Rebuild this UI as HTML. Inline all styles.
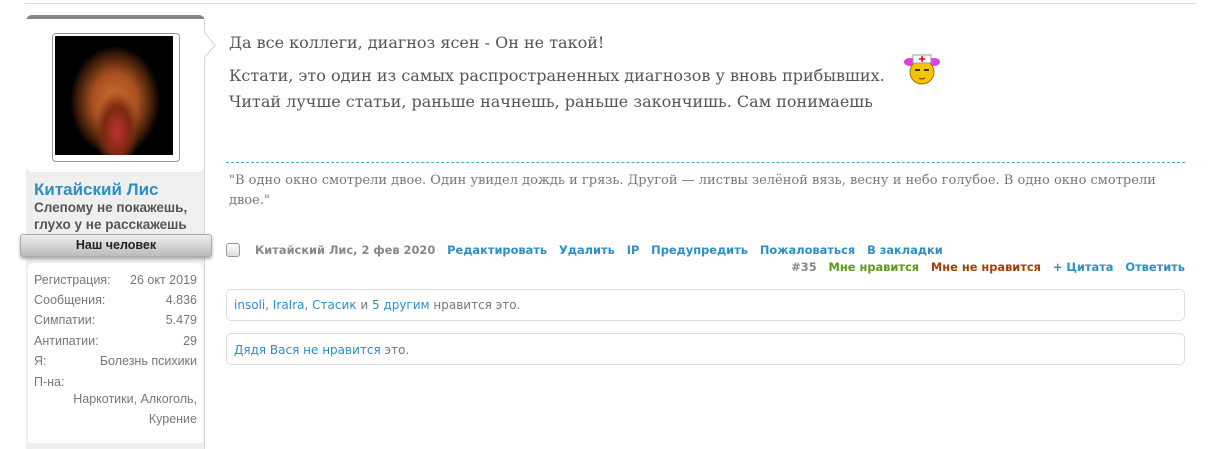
<!DOCTYPE html>
<html><head><meta charset="utf-8"><style>
body{margin:0;width:1219px;height:434px;background:#fff;position:relative;overflow:hidden;font-family:"Liberation Sans","DejaVu Sans",sans-serif}
.a{position:absolute}
.topline{left:25px;top:3px;width:1172px;height:1px;background:#ddd}
.side{left:26px;top:15px;width:178px;height:430px;background:#efefef;border-top:4px solid #888;border-right:1px solid #d5d5d5;border-radius:6px 6px 0 0}
.wtop{left:26px;top:19px;width:178px;height:153px;background:#fff;border-radius:0 0 6px 6px}
.av{left:52px;top:33px;width:122px;height:123px;border:1px solid #999;border-radius:4px;background:#fff;padding:2px}
.av div{width:118px;height:119px;background:radial-gradient(ellipse 22px 40px at 62px 95px,#c03030 0%,#7a2a10 60%,transparent 100%),radial-gradient(ellipse 45px 55px at 60px 65px,#d07030 0%,#a85020 50%,#3a1a08 85%,#000 100%)}
.name{left:34px;top:180px;font-size:17px;font-weight:bold;color:#2d8fc4}
.ttl{left:34px;top:199px;font-size:13.5px;font-weight:bold;color:#555;line-height:17px}
.rib{left:20px;top:234px;width:190px;height:21px;background:linear-gradient(#eee,#bbb);border:1px solid #aaa;border-radius:3px;box-shadow:0 2px 3px rgba(0,0,0,.3);text-align:center;font-size:12.5px;font-weight:bold;color:#222;line-height:21px}
.stats{left:28px;top:263px;width:175px;height:180px;background:#fff;border-radius:6px 6px 0 0}
.st{left:34px;width:163px;font-size:12.5px;color:#777;display:flex;justify-content:space-between}
.msg{left:229px;font-family:"DejaVu Serif","Liberation Serif",serif;font-size:16px;color:#555}
.sig{left:229px;top:171px;width:955px;font-family:"DejaVu Serif","Liberation Serif",serif;font-size:13px;color:#777;line-height:20px}
.dot{left:226px;top:162px;width:959px;border-top:1px dashed #3ab0c8}
.foot{font-family:"DejaVu Sans",sans-serif;font-size:11.4px;font-weight:bold;color:#2d8fc4;white-space:nowrap}
.box{left:226px;width:959px;border:1px solid #ddd;border-radius:5px;font-family:"DejaVu Sans",sans-serif;font-size:12px;color:#777;padding-left:7px;box-sizing:border-box}
.b{color:#2d8fc4}
</style></head><body>
<div class="a topline"></div>
<div class="a side"></div>
<div class="a wtop"></div>
<svg class="a" style="left:204px;top:30px" width="14" height="30"><path d="M0 2 L11 15 L0 28" fill="#fff" stroke="#d5d5d5"/></svg>
<div class="a av"><div></div></div>
<div class="a name">Китайский Лис</div>
<div class="a ttl">Слепому не покажешь,<br>глухо у не расскажешь</div>
<div class="a rib">Наш человек</div>
<div class="a stats"></div>
<div class="a st" style="top:273px"><span>Регистрация:</span><span>26 окт 2019</span></div>
<div class="a st" style="top:293px"><span>Сообщения:</span><span>4.836</span></div>
<div class="a st" style="top:313px"><span>Симпатии:</span><span>5.479</span></div>
<div class="a st" style="top:334px"><span>Антипатии:</span><span>29</span></div>
<div class="a st" style="top:354px"><span>Я:</span><span>Болезнь психики</span></div>
<div class="a st" style="top:375px"><span>П-на:</span><span></span></div>
<div class="a st" style="top:392px;justify-content:flex-end"><span>Наркотики, Алкоголь,</span></div>
<div class="a st" style="top:412px;justify-content:flex-end"><span>Курение</span></div>

<div class="a msg" style="top:33px">Да все коллеги, диагноз ясен - Он не такой!</div>
<div class="a msg" style="top:63px;line-height:26px">Кстати, это один из самых распространенных диагнозов у вновь прибывших.<br>Читай лучше статьи, раньше начнешь, раньше закончишь. Сам понимаешь</div>
<svg class="a" style="left:902px;top:50px" width="40" height="36"><ellipse cx="8" cy="12" rx="6" ry="4" fill="#e040e0"/><ellipse cx="32" cy="12" rx="6" ry="4" fill="#e040e0"/><circle cx="20" cy="22" r="12" fill="#f5c400" stroke="#a07000"/><rect x="11" y="5" width="18" height="8" fill="#fff" stroke="#999"/><path d="M17 9h6M20 6v6" stroke="#e00" stroke-width="1.5"/><path d="M13 20h5M22 20h5" stroke="#333" stroke-width="2"/><path d="M17 28q3 2 6 0" stroke="#630" fill="none"/></svg>
<div class="a dot"></div>
<div class="a sig">"В одно окно смотрели двое. Один увидел дождь и грязь. Другой — листвы зелёной вязь, весну и небо голубое. В одно окно смотрели двое."</div>

<div class="a" style="left:226px;top:243px;width:12px;height:12px;border:1px solid #999;border-radius:3px;background:linear-gradient(#fff,#ddd)"></div>
<div class="a foot" style="left:255px;top:243px"><span style="color:#888">Китайский Лис, 2 фев 2020</span>&nbsp;&nbsp; Редактировать&nbsp;&nbsp; Удалить&nbsp;&nbsp; IP&nbsp;&nbsp; Предупредить&nbsp;&nbsp; Пожаловаться&nbsp;&nbsp; В закладки</div>
<div class="a foot" style="right:34px;top:260px"><span style="color:#888">#35</span>&nbsp;&nbsp; <span style="color:#5a9a1a">Мне нравится</span>&nbsp;&nbsp; <span style="color:#a0400a">Мне не нравится</span>&nbsp;&nbsp; + Цитата&nbsp;&nbsp; Ответить</div>
<div class="a box" style="top:289px;height:32px;line-height:30px"><span class="b">insoli</span>, <span class="b">IraIra</span>, <span class="b">Стасик</span> и <span class="b">5 другим</span> нравится это.</div>
<div class="a box" style="top:333px;height:32px;line-height:32px"><span class="b">Дядя Вася</span> <span class="b">не нравится</span> это.</div>
</body></html>
